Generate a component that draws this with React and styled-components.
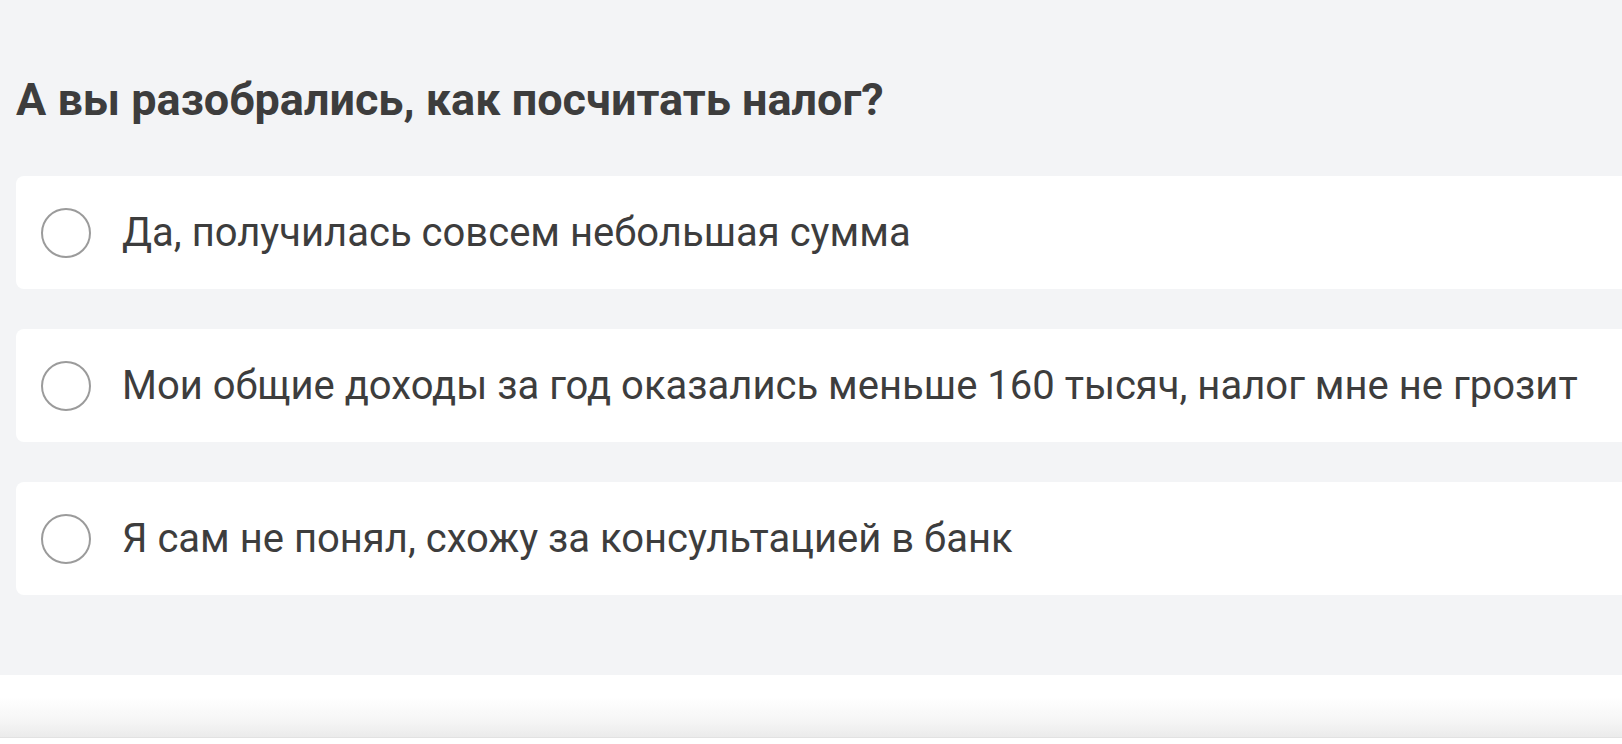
import React from 'react';
import styled, { createGlobalStyle } from 'styled-components';

const options = [
  'Да, получилась совсем небольшая сумма',
  'Мои общие доходы за год оказались меньше 160 тысяч, налог мне не грозит',
  'Я сам не понял, схожу за консультацией в банк',
];

const App = () => {
  return (
    <>
      <GlobalStyle />
      <Page>
        <Question>
          <Title>А вы разобрались, как посчитать налог?</Title>
          <List>
            {options.map((text) => (
              <Option key={text}>
                <Radio />
                <Label>{text}</Label>
              </Option>
            ))}
          </List>
        </Question>
        <Bottom />
      </Page>
    </>
  );
};

export default App;

const GlobalStyle = createGlobalStyle`
html, body {
  margin:0;
  padding:0;
  background:#ffffff;
  overflow:hidden;
}
body {
  font-family: Roboto, "Noto Sans", Arial, sans-serif;
}
`;

const Page = styled.div`
width:100%;
height:744px;
display:flex;
flex-direction:column;
`;

const Question = styled.section`
background-color:#f3f4f6;
padding:0 0 80px 16px;
height:675px;
box-sizing:border-box;
display:flex;
flex-direction:column;
`;

const Title = styled.h2`
margin:0;
padding-top:74px;
height:102px;
font-size:45px;
line-height:52px;
font-weight:700;
color:#3d3d3d;
`;

const List = styled.div`
display:flex;
flex-direction:column;
gap:40px;
`;

const Option = styled.label`
height:113px;
background:#ffffff;
border-radius:8px 0 0 8px;
display:flex;
align-items:center;
padding-left:25px;
box-sizing:border-box;
cursor:pointer;
`;

const Radio = styled.span`
width:46px;
height:46px;
border:2px solid #9b9b9b;
border-radius:50%;
flex-shrink:0;
margin-right:31px;
`;

const Label = styled.span`
font-size:40px;
line-height:48px;
color:#3d3d3d;
white-space:nowrap;
`;

const Bottom = styled.div`
flex:1;
border-bottom:1px solid #e2e2e2;
background:linear-gradient(
  to bottom,
  #ffffff 0px,
  #ffffff 22px,
  #f6f6f6 45px,
  #ebebeb 62px
);
margin-bottom:6px;
`;
